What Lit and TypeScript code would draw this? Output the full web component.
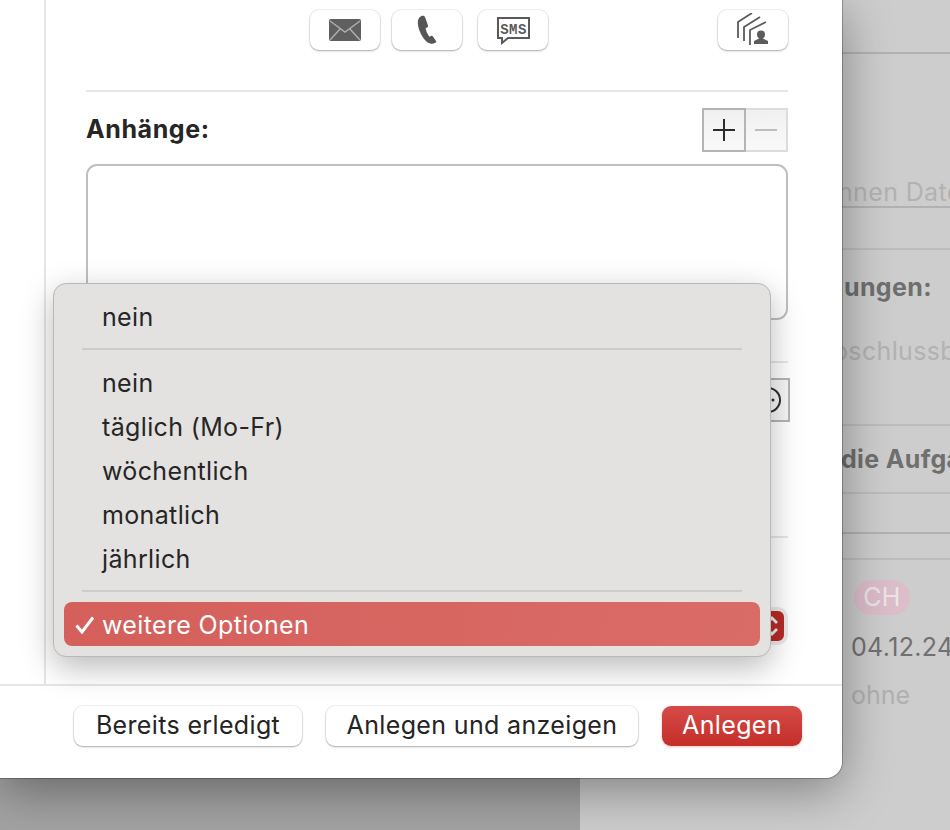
import { LitElement, html, css, svg } from 'lit';
import { customElement } from 'lit/decorators.js';

const mailIcon = svg`
  <svg width="34" height="24" viewBox="0 0 34 24">
    <rect x="1" y="1" width="32" height="22" rx="2" fill="#5f5f5f" />
    <path d="M2 3l15 11L32 3M2 22l10.500-11.500M32 22L21.500 10.500" fill="none" stroke="#adadad" stroke-width="1.500" />
  </svg>`;

const phoneIcon = svg`
  <svg width="22" height="30" viewBox="0 0 22 30">
    <path d="M5.500 1C3 2 1.500 4.500 1.800 8.500c.5 6 4 13.500 8.700 18 2.400 2.300 5.500 2.800 8.800 1.300.9-.4 1.200-1.100.7-1.900l-3.200-4.600c-.5-.7-1.200-.8-1.900-.4l-1.500.9c-1.800-2.300-3.300-5.700-3.800-8.500l1.700-1c.7-.4.900-1.100.7-1.900L9 2c-.3-.9-2.300-1.500-3.500-1z" fill="#565656" />
  </svg>`;

const smsIcon = svg`
  <svg width="36" height="30" viewBox="0 0 36 30">
    <path d="M3 3h31v20H13l-6 5v-5H3z" fill="none" stroke="#5a5a5a" stroke-width="2" />
    <text x="18.500" y="18.500" text-anchor="middle" font-family="Liberation Mono, monospace" font-weight="700" font-size="14" letter-spacing="0.500" fill="#5a5a5a">SMS</text>
  </svg>`;

const addressIcon = svg`
  <svg width="34" height="34" viewBox="0 0 34 34">
    <path d="M2 25V9L16 0M8 28V14L24 4M14 32V17L30 9" fill="none" stroke="#5c5c5c" stroke-width="1.800" />
    <circle cx="25" cy="21.500" r="4" fill="#5c5c5c" />
    <path d="M18 31v-3l5-2.500v-2h4v2l5 2.500v3z" fill="#5c5c5c" />
  </svg>`;

@customElement('app-root')
export class AppRoot extends LitElement {
  static styles = css`
    :host {
      display: flex;
      position: relative;
      width: 950px;
      height: 830px;
      overflow: hidden;
      font-family: Inter, 'Liberation Sans', sans-serif;
      letter-spacing: 0.35px;
      background: #a3a3a3;
    }

    /* dimmed window behind the sheet */
    .backdrop {
      margin-left: 580px;
      width: 370px;
      height: 830px;
      flex: none;
      box-sizing: border-box;
      background: #cdcdcd;
      overflow: hidden;
      white-space: nowrap;
      font-size: 25px;
      color: #b2b2b2;
    }
    .row {
      box-sizing: border-box;
      border-bottom: 2px solid #b2b2b2;
      padding-left: 264px;
    }
    .row.faint {
      border-bottom-color: #bdbdbd;
    }
    .r1 { height: 54px; }
    .r2 { height: 154px; padding-top: 124px; line-height: 29px; text-indent: -6px; }
    .r3 { height: 42px; }
    .r4 { height: 176px; padding-top: 22px; }
    .r5 { height: 68px; padding-top: 18px; }
    .r6 { height: 40px; }
    .r7 { height: 26px; }
    .bold {
      font-weight: 700;
      color: #6f6f6f;
      line-height: 30px;
    }
    .sub {
      margin-top: 34px;
      margin-left: -11px;
      line-height: 30px;
    }
    .r5 .bold { margin-left: -3px; }
    .tail {
      padding: 20px 0 0 271px;
    }
    .pill {
      display: inline-block;
      width: 56px;
      height: 35px;
      margin-left: 3px;
      border-radius: 18px;
      background: #dcbdca;
      color: #ebe6e6;
      text-align: center;
      line-height: 35px;
      font-size: 25px;
    }
    .date {
      margin-top: 17px;
      line-height: 30px;
      color: #707070;
    }
    .none {
      margin-top: 18px;
      line-height: 30px;
      color: #b0b0b0;
      letter-spacing: 0;
    }

    .sheet {
      position: absolute;
      left: 0;
      top: 0;
      width: 842px;
      height: 778px;
      display: flex;
      flex-direction: column;
      background: #fff;
      border-radius: 0 0 16px 0;
      box-shadow: 0 0 0 1px rgba(0, 0, 0, 0.25), 0 12px 50px rgba(0, 0, 0, 0.38);
    }
    .main {
      height: 686px;
      flex: none;
      box-sizing: border-box;
      border-bottom: 2px solid #e6e6e6;
    }
    .content {
      height: 100%;
      box-sizing: border-box;
      margin-left: 44px;
      padding: 10px 54px 0 40px;
      border-left: 2px solid #e6e6e6;
    }
    .footer {
      flex: 1;
      display: flex;
      justify-content: flex-end;
      align-items: flex-start;
      gap: 24px;
      padding: 20px 40px 0 0;
    }
    .tools {
      display: flex;
      gap: 12px;
      padding-left: 224px;
    }
    .tool {
      width: 70px;
      height: 40px;
      flex: none;
      display: flex;
      align-items: center;
      justify-content: center;
      background: #fff;
      border-radius: 9px;
      box-shadow: 0 0 0 1px rgba(0, 0, 0, 0.05), 0 1px 2px rgba(0, 0, 0, 0.3);
    }
    .tool.sms { margin-left: 4px; }
    .tool.address { margin-left: auto; }
    .rule {
      height: 2px;
      background: #e6e6e6;
    }
    .tools + .rule { margin-top: 40px; }
    .attach {
      display: flex;
      align-items: center;
      justify-content: space-between;
      margin-top: 16px;
    }
    .label {
      font-size: 25px;
      font-weight: 700;
      letter-spacing: 0.6px;
      color: #262626;
      padding-bottom: 3px;
    }
    .stepper {
      display: flex;
    }
    .stepper span {
      width: 44px;
      height: 44px;
      box-sizing: border-box;
      display: flex;
      align-items: center;
      justify-content: center;
      border: 2px solid #b4b4b4;
      background: linear-gradient(#f0f0f0, #f9f9f9);
    }
    .stepper .off {
      width: 42px;
      border: 2px solid #dcdcdc;
      border-left: none;
    }
    .field {
      height: 156px;
      margin-top: 12px;
      box-sizing: border-box;
      border: 2px solid #bfbfbf;
      border-radius: 11px;
    }
    .rule.second { margin-top: 41px; }
    .ring {
      display: flex;
      justify-content: flex-end;
      margin: 15px -2px 0 0;
    }
    .ring span {
      width: 44px;
      height: 44px;
      box-sizing: border-box;
      display: flex;
      align-items: center;
      justify-content: center;
      border: 2px solid #b4b4b4;
      background: #f7f7f7;
    }
    .rule.third { margin-top: 114px; }
    .select {
      width: 24px;
      height: 30px;
      margin: 73px 4px 0 auto;
      border-radius: 6px;
      background: #b92b27;
      box-shadow: 0 0 0 4px #ebebeb;
      display: flex;
      align-items: center;
      justify-content: center;
    }

    .btn {
      height: 40px;
      box-sizing: border-box;
      padding-bottom: 2px;
      display: flex;
      align-items: center;
      justify-content: center;
      border-radius: 9px;
      background: #fff;
      color: #242424;
      font-size: 25px;
      box-shadow: 0 0 0 1px rgba(0, 0, 0, 0.05), 0 1px 2px rgba(0, 0, 0, 0.3);
    }
    .btn.done { width: 228px; }
    .btn.show { width: 312px; }
    .btn.primary {
      width: 140px;
      color: #fff;
      background: linear-gradient(#d64b48, #c42e28);
      box-shadow: 0 1px 3px rgba(200, 50, 50, 0.3);
    }

    .menu {
      position: absolute;
      left: 53px;
      top: 283px;
      width: 718px;
      height: 374px;
      box-sizing: border-box;
      padding: 11px 10px 0;
      background: #e3e2e0;
      border: 1px solid #b9b8b6;
      border-radius: 13px;
      box-shadow: 0 10px 32px rgba(0, 0, 0, 0.28);
      font-size: 25px;
      color: #262626;
    }
    .item {
      height: 44px;
      padding-left: 38px;
      line-height: 44px;
      position: relative;
    }
    .sep {
      height: 2px;
      margin: 9px 18px 11px;
      background: #cdccca;
    }
    .sep.last {
      margin-bottom: 10px;
    }
    .item.sel {
      border-radius: 8px;
      color: #fff;
      line-height: 46px;
      background: linear-gradient(100deg, #d45f5b, #da6c67);
    }
    .check {
      position: absolute;
      left: 11px;
      top: 14px;
    }
  `;

  render() {
    return html`
      <div class="backdrop">
        <div class="row r1"></div>
        <div class="row r2">nnen Date</div>
        <div class="row r3 faint"></div>
        <div class="row r4 faint">
          <div class="bold">ungen:</div>
          <div class="sub">oschlussb</div>
        </div>
        <div class="row r5 faint"><div class="bold">die Aufga</div></div>
        <div class="row r6"></div>
        <div class="row r7 faint"></div>
        <div class="tail">
          <span class="pill">CH</span>
          <div class="date">04.12.24</div>
          <div class="none">ohne</div>
        </div>
      </div>

      <div class="sheet">
        <div class="main">
          <div class="content">
            <div class="tools">
              <div class="tool">${mailIcon}</div>
              <div class="tool">${phoneIcon}</div>
              <div class="tool sms">${smsIcon}</div>
              <div class="tool address">${addressIcon}</div>
            </div>
            <div class="rule"></div>
            <div class="attach">
              <div class="label">Anhänge:</div>
              <div class="stepper">
                <span>
                  <svg width="22" height="22" viewBox="0 0 22 22">
                    <path d="M11 0v22M0 11h22" stroke="#2c2c2c" stroke-width="2" />
                  </svg>
                </span>
                <span class="off">
                  <svg width="22" height="22" viewBox="0 0 22 22">
                    <path d="M0 11h22" stroke="#bdbdbd" stroke-width="2" />
                  </svg>
                </span>
              </div>
            </div>
            <div class="field"></div>
            <div class="rule second"></div>
            <div class="ring">
              <span>
                <svg width="28" height="28" viewBox="0 0 28 28">
                  <circle cx="14" cy="14" r="12" fill="none" stroke="#2c2c2c" stroke-width="2" />
                  <circle cx="19" cy="14" r="1.500" fill="#2c2c2c" />
                </svg>
              </span>
            </div>
            <div class="rule third"></div>
            <div class="select">
              <svg width="16" height="24" viewBox="0 0 16 24">
                <path d="M3 9l5-5 5 5M3 15l5 5 5-5" fill="none" stroke="#eee" stroke-width="2.800" />
              </svg>
            </div>
          </div>
        </div>
        <div class="footer">
          <div class="btn done">Bereits erledigt</div>
          <div class="btn show">Anlegen und anzeigen</div>
          <div class="btn primary">Anlegen</div>
        </div>
      </div>

      <div class="menu">
        <div class="item">nein</div>
        <div class="sep"></div>
        <div class="item">nein</div>
        <div class="item">täglich (Mo-Fr)</div>
        <div class="item">wöchentlich</div>
        <div class="item">monatlich</div>
        <div class="item">jährlich</div>
        <div class="sep last"></div>
        <div class="item sel">
          <svg class="check" width="20" height="18" viewBox="0 0 20 18">
            <path d="M1.500 9.500L7 16 18 1.500" fill="none" stroke="#fff" stroke-width="3" />
          </svg>
          weitere Optionen
        </div>
      </div>
    `;
  }
}
